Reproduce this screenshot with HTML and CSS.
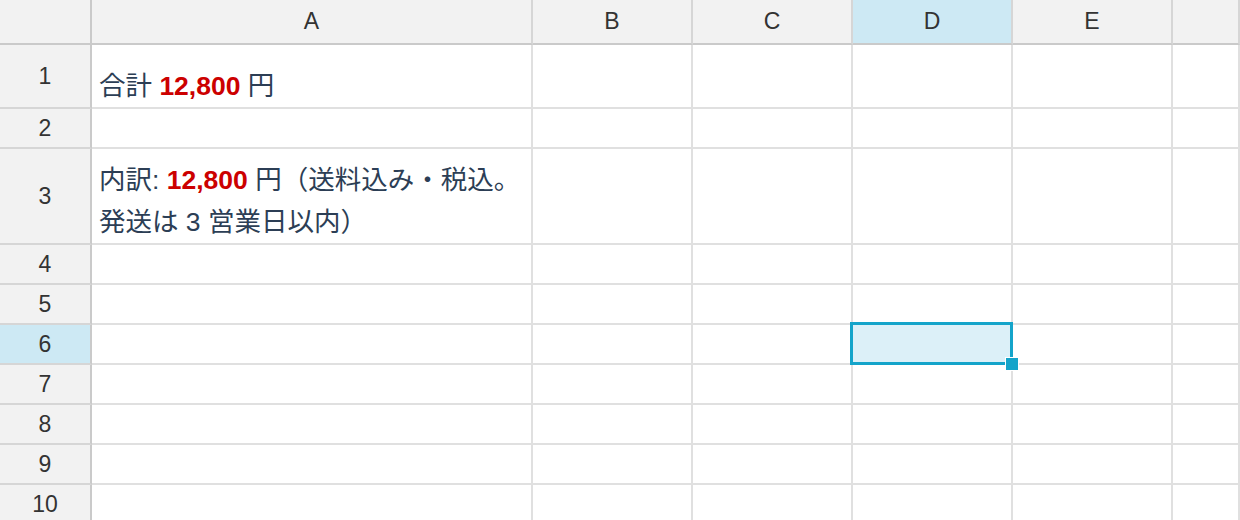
FILE: index.html
```html
<!DOCTYPE html>
<html lang="ja">
<head>
    <meta charset="UTF-8">
    <title>シート</title>
    <link rel="stylesheet" href="styles.css">
</head>
<body>
    <div class="sheet">
        <div class="corner"></div>
        <div class="col-head">A</div>
        <div class="col-head">B</div>
        <div class="col-head">C</div>
        <div class="col-head active">D</div>
        <div class="col-head">E</div>
        <div class="col-head"></div>

        <div class="row-head">1</div>
        <div class="cell text"><div class="value">合計 <b class="price">12,800</b> 円</div></div>
        <div class="cell"></div><div class="cell"></div><div class="cell"></div><div class="cell"></div><div class="cell"></div>

        <div class="row-head">2</div>
        <div class="cell"></div><div class="cell"></div><div class="cell"></div><div class="cell"></div><div class="cell"></div><div class="cell"></div>

        <div class="row-head">3</div>
        <div class="cell text"><div class="value">内訳: <b class="price">12,800</b> 円（送料込み・税込。発送は 3 営業日以内）</div></div>
        <div class="cell"></div><div class="cell"></div><div class="cell"></div><div class="cell"></div><div class="cell"></div>

        <div class="row-head">4</div>
        <div class="cell"></div><div class="cell"></div><div class="cell"></div><div class="cell"></div><div class="cell"></div><div class="cell"></div>

        <div class="row-head">5</div>
        <div class="cell"></div><div class="cell"></div><div class="cell"></div><div class="cell"></div><div class="cell"></div><div class="cell"></div>

        <div class="row-head active">6</div>
        <div class="cell"></div><div class="cell"></div><div class="cell"></div>
        <div class="cell selected">
            <div class="selection"></div>
            <div class="handle"></div>
        </div>
        <div class="cell"></div><div class="cell"></div>

        <div class="row-head">7</div>
        <div class="cell"></div><div class="cell"></div><div class="cell"></div><div class="cell"></div><div class="cell"></div><div class="cell"></div>

        <div class="row-head">8</div>
        <div class="cell"></div><div class="cell"></div><div class="cell"></div><div class="cell"></div><div class="cell"></div><div class="cell"></div>

        <div class="row-head">9</div>
        <div class="cell"></div><div class="cell"></div><div class="cell"></div><div class="cell"></div><div class="cell"></div><div class="cell"></div>

        <div class="row-head">10</div>
        <div class="cell"></div><div class="cell"></div><div class="cell"></div><div class="cell"></div><div class="cell"></div><div class="cell"></div>
    </div>
</body>
</html>
```

FILE: styles.css
```css
body {
    margin: 0;
    background: #fff;
    font-family: "Liberation Sans", "Noto Sans CJK JP", sans-serif;
    overflow: hidden;
}
.sheet {
    display: grid;
    grid-template-columns: 92px 441px repeat(4, 160px) 67px;
    grid-template-rows: 45px 64px 40px 96px repeat(7, 40px);
    height: 520px;
    overflow: hidden;
}
.sheet > div {
    box-sizing: border-box;
}
.corner,
.col-head,
.row-head {
    background: #f2f2f2;
    color: #333;
    font-size: 23px;
    display: flex;
    align-items: center;
    justify-content: center;
    border-right: 2px solid #d6d6d6;
    border-bottom: 2px solid #d6d6d6;
}
.corner,
.col-head {
    border-bottom-color: #cacaca;
}
.corner,
.row-head {
    border-right-color: #cacaca;
}
.col-head.active,
.row-head.active {
    background: #cde9f4;
}
.cell {
    position: relative;
    border-right: 2px solid #e0e0e0;
    border-bottom: 2px solid #e0e0e0;
}
.cell.text {
    display: flex;
    align-items: flex-end;
    padding: 0 6px 0 7px;
    font-size: 26.5px;
    line-height: 42px;
    color: #2c3e55;
}
.price {
    color: #cc0000;
    font-weight: bold;
}
.cell.selected {
    background: #dcf0f8;
}
.selection {
    position: absolute;
    z-index: 1;
    top: -3px;
    left: -3px;
    right: -2px;
    bottom: -2px;
    border: 3px solid #14a4ca;
}
.handle {
    position: absolute;
    z-index: 2;
    right: -7px;
    bottom: -7px;
    width: 12px;
    height: 12px;
    background: #14a4ca;
    box-shadow: 0 0 0 1px #fff;
}
```
